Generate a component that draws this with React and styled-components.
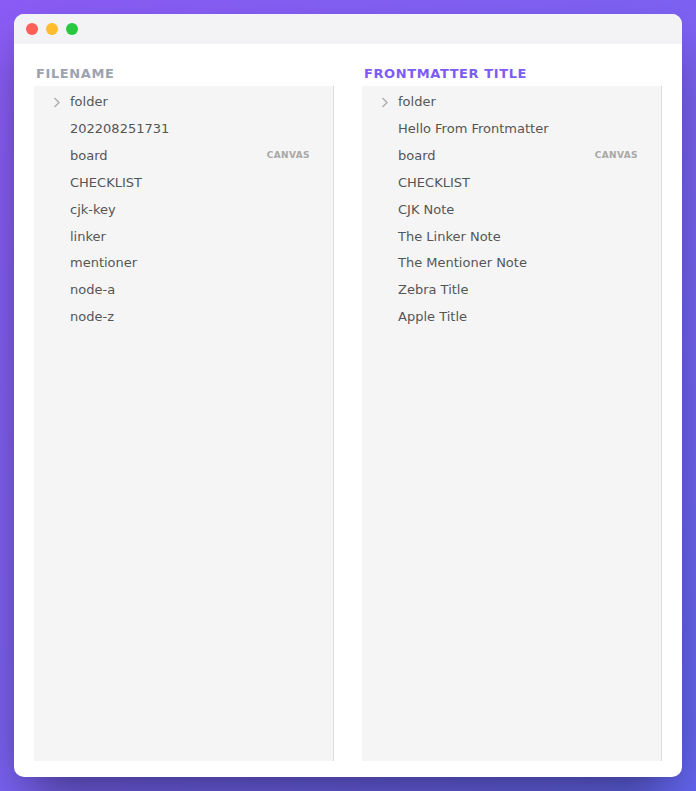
import React from "react";
import styled, { createGlobalStyle } from "styled-components";

const Global = createGlobalStyle`
  html, body { margin: 0; padding: 0; }
  body {
    width: 696px;
    height: 791px;
    overflow: hidden;
    background: linear-gradient(135deg, #8b5cf6 0%, #7c62f3 50%, #6366f1 100%);
    font-family: "DejaVu Sans", "Liberation Sans", sans-serif;
  }
`;

const Stage = styled.div`
  padding: 14px 14px 0 14px;
  height: 791px;
  box-sizing: border-box;
`;

const Window = styled.div`
  height: 763px;
  background: #ffffff;
  border-radius: 10px;
  overflow: hidden;
  display: flex;
  flex-direction: column;
  box-shadow: 0 25px 50px -12px rgba(0, 0, 0, 0.5);
`;

const TitleBar = styled.div`
  height: 30px;
  flex: none;
  background: #f3f3f5;
  display: flex;
  align-items: center;
  gap: 8px;
  padding-left: 12px;
`;

const Dot = styled.span`
  width: 12px;
  height: 12px;
  border-radius: 50%;
  background: ${(p) => p.$color};
`;

const Body = styled.div`
  flex: 1;
  display: grid;
  grid-template-columns: 300px 300px;
  column-gap: 28px;
  padding: 20px 20px 16px 20px;
  min-height: 0;
`;

const Column = styled.div`
  display: flex;
  flex-direction: column;
  min-height: 0;
`;

const Heading = styled.div`
  font-size: 13px;
  font-weight: bold;
  letter-spacing: 0.6px;
  line-height: 18px;
  padding: 1px 0 0 2px;
  margin-bottom: 3px;
  color: ${(p) => (p.$active ? "#7c5cf6" : "#9ca3af")};
`;

const Panel = styled.div`
  flex: 1;
  background: #f5f5f5;
  border-right: 1px solid #dcdcdc;
  padding-top: 2.2px;
`;

const Row = styled.div`
  height: 26.875px;
  display: flex;
  align-items: center;
  padding: 0 23px 0 16px;
  font-size: 13px;
  color: #555555;
`;

const IconSlot = styled.span`
  width: 20px;
  flex: none;
  display: flex;
  align-items: center;
  justify-content: flex-start;
  padding: 2px 0 0 3px;
  box-sizing: border-box;
`;

const Label = styled.span`
  flex: 1;
  white-space: nowrap;
`;

const Badge = styled.span`
  font-size: 9px;
  font-weight: bold;
  letter-spacing: 0.4px;
  color: #a8a8a8;
`;

const Chevron = () => (
  <svg width="9" height="11" viewBox="0 0 9 11">
    <path d="M1.5 1 L6 5.5 L1.5 10" fill="none" stroke="#adadad" strokeWidth="1.4" />
  </svg>
);

const left = [
  { name: "folder", folder: true },
  { name: "202208251731" },
  { name: "board", badge: "CANVAS" },
  { name: "CHECKLIST" },
  { name: "cjk-key" },
  { name: "linker" },
  { name: "mentioner" },
  { name: "node-a" },
  { name: "node-z" },
];

const right = [
  { name: "folder", folder: true },
  { name: "Hello From Frontmatter" },
  { name: "board", badge: "CANVAS" },
  { name: "CHECKLIST" },
  { name: "CJK Note" },
  { name: "The Linker Note" },
  { name: "The Mentioner Note" },
  { name: "Zebra Title" },
  { name: "Apple Title" },
];

const List = ({ items }) => (
  <Panel>
    {items.map((it, i) => (
      <Row key={i}>
        <IconSlot>{it.folder && <Chevron />}</IconSlot>
        <Label>{it.name}</Label>
        {it.badge && <Badge>{it.badge}</Badge>}
      </Row>
    ))}
  </Panel>
);

export default function App() {
  return (
    <>
      <Global />
      <Stage>
        <Window>
          <TitleBar>
            <Dot $color="#ff5f57" />
            <Dot $color="#febc2e" />
            <Dot $color="#28c840" />
          </TitleBar>
          <Body>
            <Column>
              <Heading>FILENAME</Heading>
              <List items={left} />
            </Column>
            <Column>
              <Heading $active>FRONTMATTER TITLE</Heading>
              <List items={right} />
            </Column>
          </Body>
        </Window>
      </Stage>
    </>
  );
}
